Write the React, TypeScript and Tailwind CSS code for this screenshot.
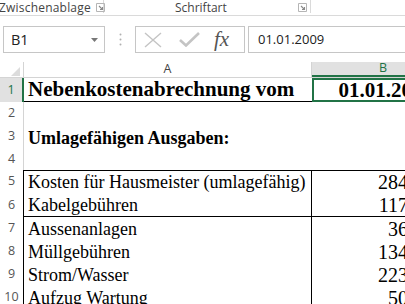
import React from 'react';

const serif = { fontFamily: '"Liberation Serif", "Times New Roman", serif' };
const ui = { fontFamily: '"Open Sans", "Noto Sans", sans-serif' };

const costRows = [
  { n: 5, label: 'Kosten für Hausmeister (umlagefähig)', value: '284,00 €', top: true },
  { n: 6, label: 'Kabelgebühren', value: '117,00 €', bottom: true },
  { n: 7, label: 'Aussenanlagen', value: '36,00 €' },
  { n: 8, label: 'Müllgebühren', value: '134,00 €' },
  { n: 9, label: 'Strom/Wasser', value: '223,00 €' },
  { n: 10, label: 'Aufzug Wartung', value: '50,00 €' },
];

function Launcher() {
  return (
    <svg width="9" height="9" viewBox="0 0 9 9" className="shrink-0">
      <path d="M0.5 0.5h8v8h-8z" fill="none" stroke="#b5b5b5" />
      <path d="M3 3l3.5 3.5M6.5 4v2.5H4" fill="none" stroke="#8a8a8a" strokeWidth="1.1" />
    </svg>
  );
}

function RowHead({ n, edge = 'border-[#d4d4d4]' }: { n: number; edge?: string }) {
  return (
    <div
      className={`w-[24px] shrink-0 border-r flex items-center justify-center text-[12.5px] text-[#555] ${edge}`}
      style={ui}
    >
      {n}
    </div>
  );
}

export default function App() {
  return (
    <div className="relative w-[405px] h-[304px] overflow-hidden bg-white">
      {/* ribbon group labels */}
      <div className="flex h-[16px] border-b border-[#dadada] text-[12px] text-[#444] leading-[15px]" style={ui}>
        <div className="flex w-[104px] items-start border-r border-[#dadada] h-[13px]">
          <span className="-ml-[1px] tracking-[0.2px]">Zwischenablage</span>
          <span className="ml-[5px] mt-[3px]">
            <Launcher />
          </span>
        </div>
        <div className="relative flex w-[207px] h-[13px] border-r border-[#dadada]">
          <span className="ml-[71px]">Schriftart</span>
          <span className="absolute left-[194px] top-[3px]">
            <Launcher />
          </span>
        </div>
      </div>

      {/* formula bar */}
      <div className="mt-[10px] flex h-[27px]">
        <div className="ml-[3px] flex w-[102px] items-center border border-[#c6c6c6] pl-[7px] pr-[6px] text-[14.5px] text-[#222]" style={ui}>
          <span className="flex-1">B1</span>
          <svg width="7" height="4" viewBox="0 0 7 4">
            <path d="M0 0h7L3.5 4z" fill="#777" />
          </svg>
        </div>
        <div className="flex w-[30px] items-center justify-center">
          <svg width="3" height="13" viewBox="0 0 3 13">
            <circle cx="1.5" cy="1.5" r="1" fill="#b0b0b0" />
            <circle cx="1.5" cy="6.5" r="1" fill="#b0b0b0" />
            <circle cx="1.5" cy="11.5" r="1" fill="#b0b0b0" />
          </svg>
        </div>
        <div className="flex w-[110px] items-center border border-[#c6c6c6]">
          <svg width="20" height="16" viewBox="0 0 20 16" className="ml-[7px]">
            <path d="M2 1l16 14M18 1L2 15" stroke="#c4c4c4" strokeWidth="1.4" fill="none" />
          </svg>
          <svg width="21" height="15" viewBox="0 0 21 15" className="ml-[16px]">
            <path d="M1 8l6 5.5L20 1" stroke="#c4c4c4" strokeWidth="2.6" fill="none" />
          </svg>
          <span className="ml-[14px] text-[21px] italic text-[#555] leading-none" style={serif}>
            fx
          </span>
        </div>
        <div className="ml-[3px] flex flex-1 items-center border border-r-0 border-[#c6c6c6] pl-[9px] text-[13px] text-[#222]" style={ui}>
          01.01.2009
        </div>
      </div>

      {/* sheet */}
      <div className="mt-[9px] w-[460px]">
        <div className="flex h-[16px] border-b border-[#d4d4d4] text-[12.5px]" style={ui}>
          <div className="flex w-[24px] items-end justify-end border-r border-[#d4d4d4] pb-[1px] pr-[3px]">
            <svg width="9" height="9" viewBox="0 0 9 9">
              <path d="M9 0v9H0z" fill="#dcdcdc" />
            </svg>
          </div>
          <div className="flex w-[288px] items-center justify-center border-r border-[#d4d4d4] text-[#444]">A</div>
          <div className="flex w-[136px] items-center justify-center border-b-2 border-[#217346] bg-[#e1e1e1] text-[#217346]">
            <span className="ml-[6px]">B</span>
          </div>
        </div>

        {/* row 1 */}
        <div className="flex h-[24px]">
          <div className="flex w-[24px] items-center justify-center border-r-2 border-[#217346] bg-[#e1e1e1] text-[12.5px] text-[#217346]" style={ui}>
            1
          </div>
          <div className="w-[288px] border-b border-black pl-[4px] text-[21px] font-bold leading-[23px] text-black" style={serif}>
            Nebenkostenabrechnung vom
          </div>
          <div className="w-[136px] border-2 border-[#217346] pr-[13px] text-right text-[21px] font-bold leading-[20px] text-black" style={serif}>
            01.01.2009
          </div>
        </div>

        <div className="flex h-[23px]">
          <RowHead n={2} />
        </div>
        <div className="flex h-[23px]">
          <RowHead n={3} />
          <div className="pl-[4px] text-[18px] font-bold leading-[27px] text-black" style={serif}>
            Umlagefähigen Ausgaben:
          </div>
        </div>
        <div className="flex h-[22px]">
          <RowHead n={4} />
        </div>

        {costRows.map(r => (
          <div key={r.n} className={`flex ${r.bottom ? 'h-[24px]' : 'h-[23px]'}`}>
            <RowHead n={r.n} edge="border-black" />
            <div
              className={`flex w-[288px] items-end border-r border-black pb-[1px] pl-[4px] text-[18px] leading-[20px] text-black ${r.top ? 'border-t' : ''} ${r.bottom ? 'border-b' : ''}`}
              style={serif}
            >
              {r.label}
            </div>
            <div
              className={`flex w-[136px] items-end justify-end pb-[1px] pr-0 text-[20px] leading-[20px] text-black ${r.top ? 'border-t border-black' : ''} ${r.bottom ? 'border-b border-black' : ''}`}
              style={serif}
            >
              {r.value}
            </div>
          </div>
        ))}
      </div>
    </div>
  );
}
